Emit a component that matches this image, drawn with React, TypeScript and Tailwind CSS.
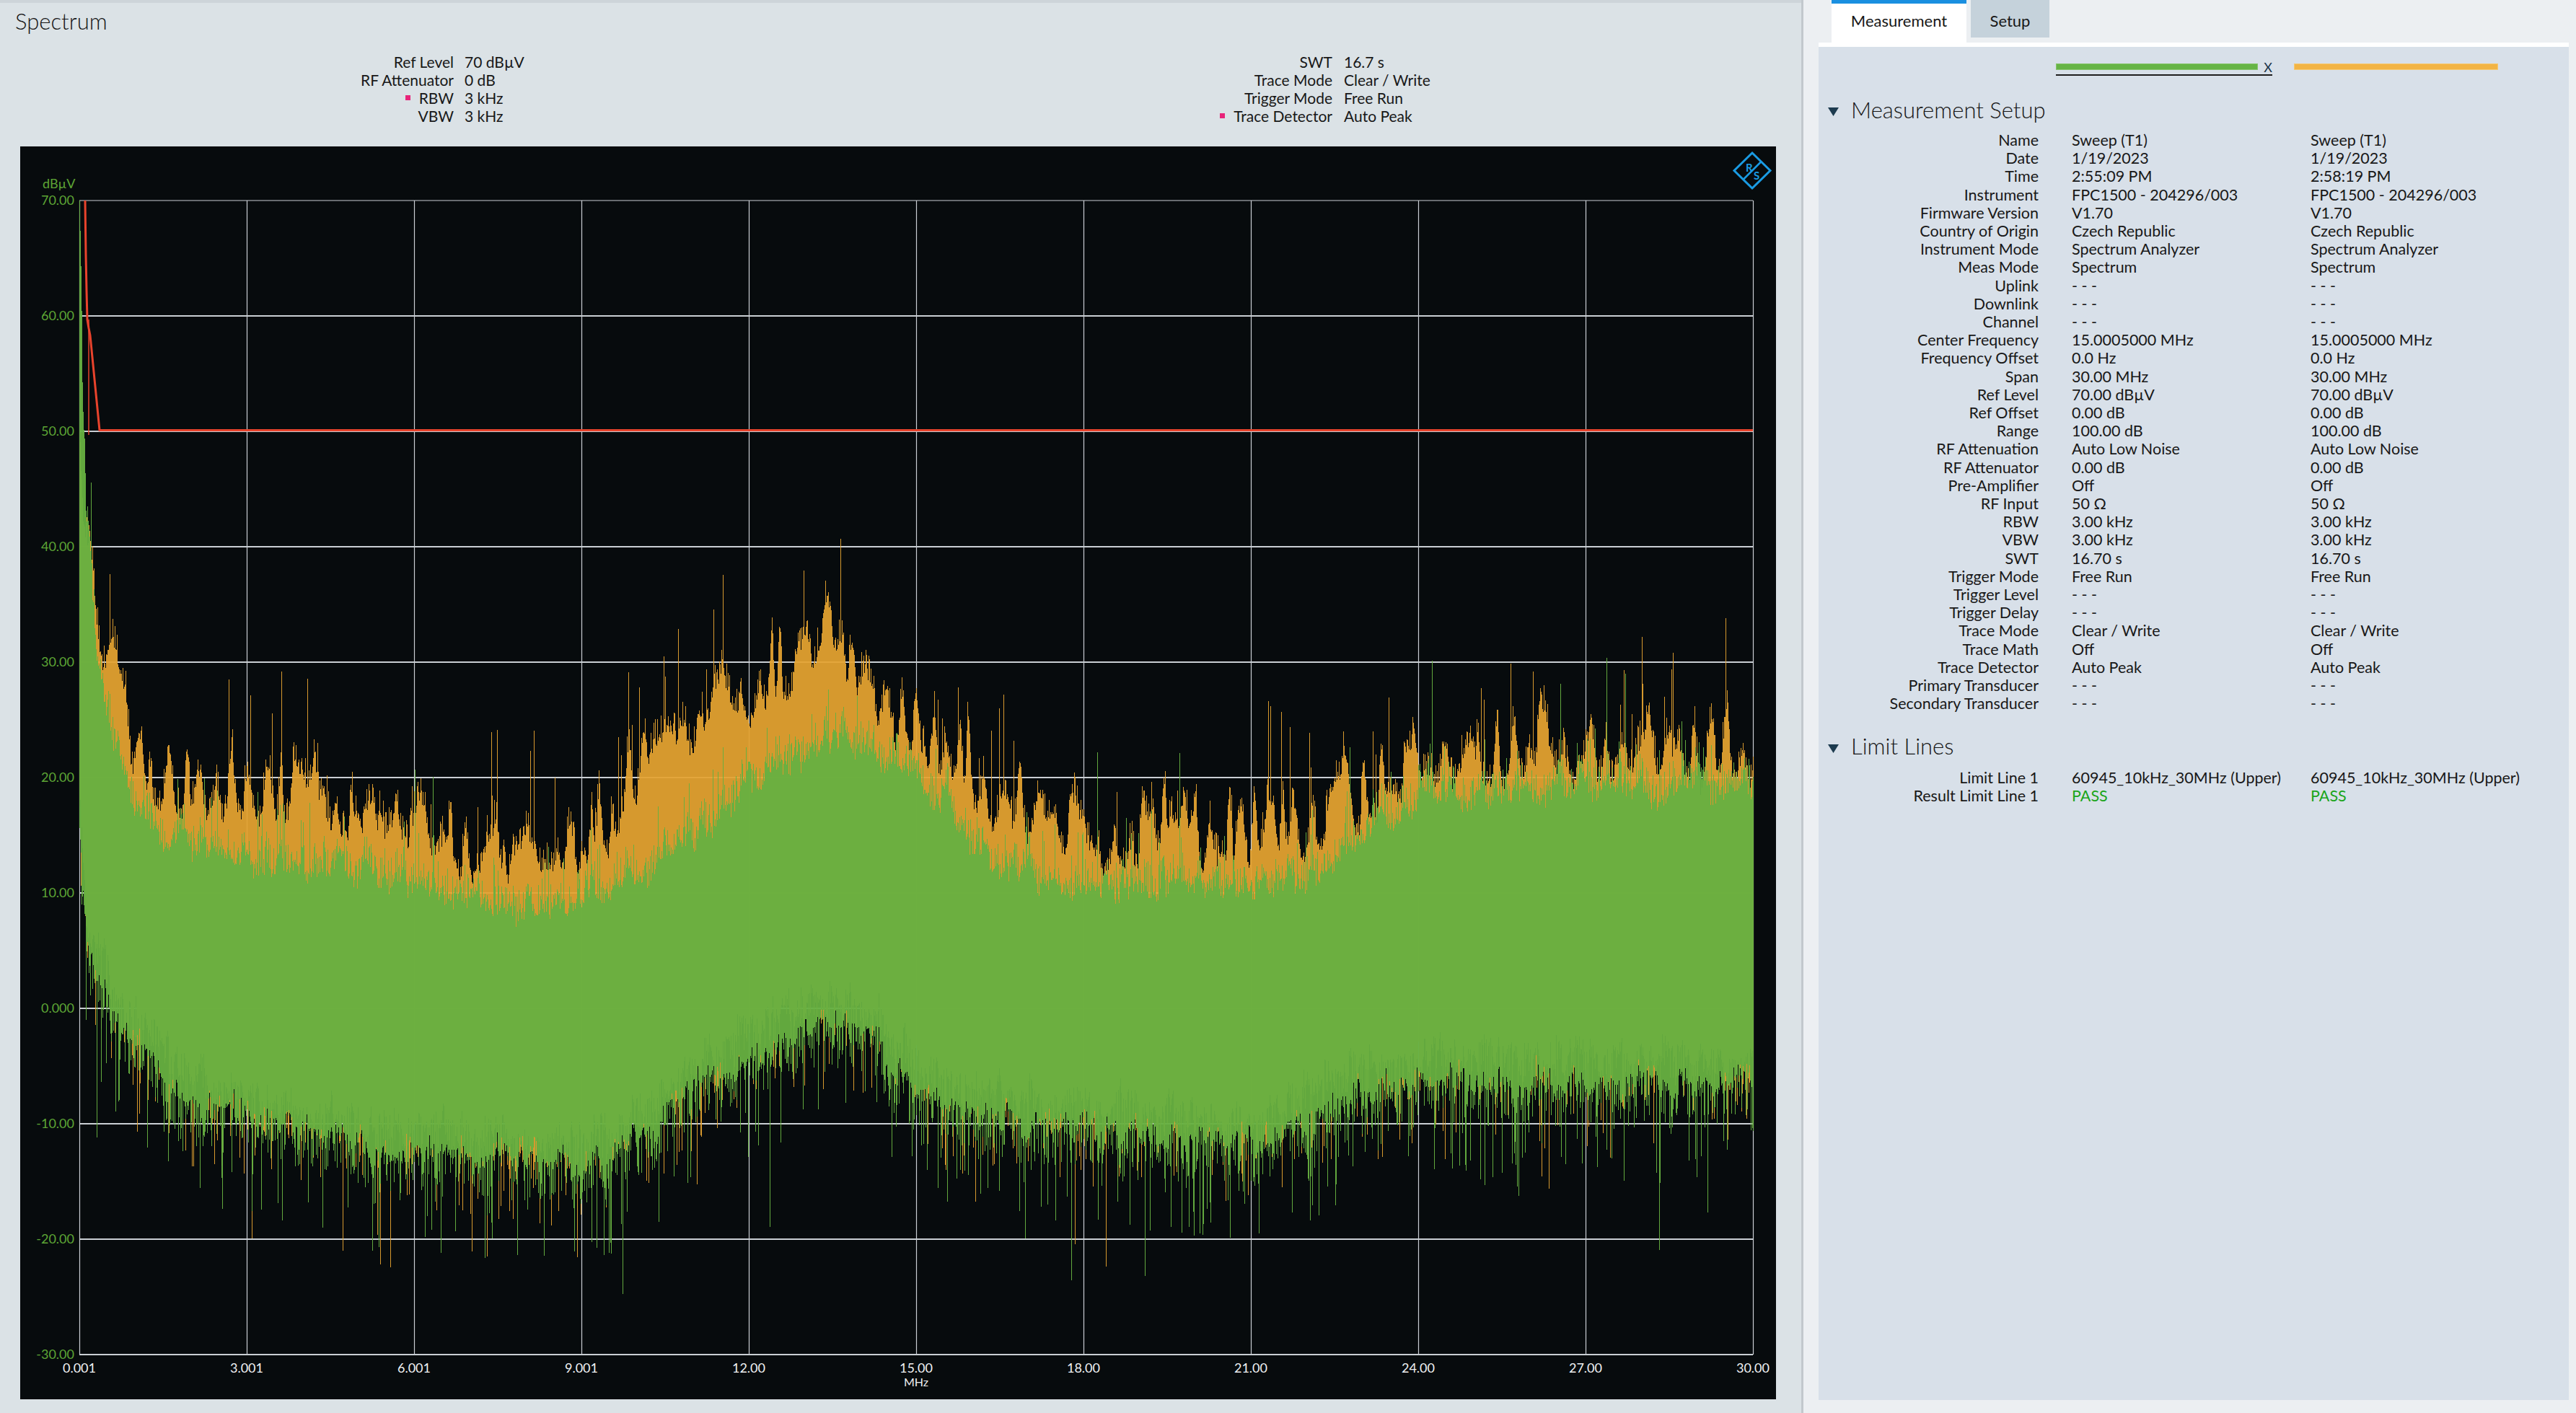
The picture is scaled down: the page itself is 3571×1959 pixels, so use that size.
import { useMemo } from 'react'

// ── seeded noise helpers ──
function mulberry32(seed: number) {
  let a = seed
  return () => {
    a |= 0
    a = (a + 0x6d2b79f5) | 0
    let t = Math.imul(a ^ (a >>> 15), 1 | a)
    t = (t + Math.imul(t ^ (t >>> 7), 61 | t)) ^ t
    return ((t ^ (t >>> 14)) >>> 0) / 4294967296
  }
}

function lerp(pts: number[][], f: number) {
  for (let i = 0; i < pts.length - 1; i++) {
    const [f0, v0] = pts[i]
    const [f1, v1] = pts[i + 1]
    if (f <= f1) return v0 + ((v1 - v0) * (f - f0)) / (f1 - f0)
  }
  return pts[pts.length - 1][1]
}

type Lump = [number, number, number]
function makeLumps(rand: () => number, spacing: number, amp: number): Lump[] {
  const out: Lump[] = []
  for (let c = 0; c < 30.5; c += spacing * (0.5 + rand())) out.push([c, (0.3 + 0.7 * rand()) * amp, 0.04 + rand() * 0.1])
  return out
}
function lumpAt(lumps: Lump[], f: number) {
  let s = 0
  for (const [c, a, w] of lumps) {
    const d = (f - c) / w
    if (d > -4 && d < 4) s += a * Math.exp(-d * d)
  }
  return s
}

// envelopes in dBµV
const ORANGE_TOP = [[0, 48], [0.1, 42], [0.3, 32], [0.9, 23], [1.5, 20], [2, 18.5], [3, 18], [4.4, 18], [5.5, 17], [6.5, 14.5], [7.6, 12], [8.5, 12.5], [9.3, 15], [9.9, 20], [10.5, 23], [11.5, 25], [12.3, 28], [13, 31], [13.5, 33], [14, 29], [14.4, 25], [15, 24], [15.5, 21.5], [16.6, 17], [17.5, 14], [20, 14], [21.5, 15], [22.5, 17], [23.5, 19], [24.5, 21], [26, 20.5], [27, 21.5], [28.5, 22], [30, 21.5]]
const GREEN_TOP = [[0, 72], [0.05, 55], [0.12, 45], [0.2, 40], [0.33, 31], [0.6, 24], [0.9, 20], [1.4, 16.5], [2, 15], [3, 14], [4.4, 13], [6, 12], [7.8, 10], [8.5, 10], [9.9, 12.5], [11, 16], [12, 20], [12.7, 23], [13.4, 25], [14, 24], [15.1, 21], [16, 16], [16.6, 13], [17.5, 12], [22, 12], [23, 16], [24, 19.5], [26, 20.5], [28, 20.5], [30, 20]]
const GREEN_LOW = [[0, 15], [0.05, 10], [0.15, 4], [0.33, 2], [0.6, -1], [0.9, -3], [1.5, -6], [2, -9], [3, -10], [4.4, -12], [6, -13], [7.8, -14], [9, -14], [10, -12], [11, -8], [12, -5], [12.7, -2.5], [13.5, -2], [14.2, -3], [15, -8], [16, -10], [18, -11], [20, -12], [21, -13], [22, -10], [23, -8], [24, -7], [30, -7]]

const GRID_X0 = 82
const GRID_Y0 = 75
const GRID_W = 2320
const DIV_X = 232
const DIV_Y = 160
const toY = (db: number) => GRID_Y0 + (70 - Math.max(-30, Math.min(70, db))) * 16

const Y_LABELS = ['70.00', '60.00', '50.00', '40.00', '30.00', '20.00', '10.00', '0.000', '-10.00', '-20.00', '-30.00']
const X_LABELS = ['0.001', '3.001', '6.001', '9.001', '12.00', '15.00', '18.00', '21.00', '24.00', '27.00', '30.00']

function useTraces() {
  return useMemo(() => {
    const rand = mulberry32(1907)
    const lumpsO = makeLumps(rand, 0.25, 7)
    const lumpsG = makeLumps(rand, 0.5, 3)
    const upO = () => {
      const r = rand()
      if (r < 0.025) return 2 + rand() * 7
      if (r < 0.3) return rand() * 1.5
      return -rand() * 1.2
    }
    const upG = () => {
      const r = rand()
      if (r < 0.01) return 3 + rand() * 9
      if (r < 0.06) return 1 + rand() * 3.5
      if (r < 0.4) return rand() * 1.6
      return -rand() * 1.3
    }
    const down = () => {
      const r = rand()
      if (r < 0.012) return 5 + rand() * 9
      if (r < 0.11) return 2 + rand() * 6
      if (r < 0.45) return rand() * 2.5
      return -rand() * 1.5
    }
    let s1 = 0, s2 = 0, s3 = 0, s4 = 0
    let orange = ''
    let green = ''
    for (let i = 0; i <= GRID_W; i++) {
      const f = 0.001 + (29.999 * i) / GRID_W
      const x = (GRID_X0 + i + 0.5).toFixed(1)
      s1 = s1 * 0.9 + (rand() - 0.5) * 0.9
      s2 = s2 * 0.85 + (rand() - 0.5) * 0.8
      s3 = s3 * 0.85 + (rand() - 0.5) * 1.3
      s4 = s4 * 0.85 + (rand() - 0.5) * 1.3
      const ou = lerp(ORANGE_TOP, f) - 1.5 + lumpAt(lumpsO, f) + s1 + upO()
      const gu = lerp(GREEN_TOP, f) - 1 + lumpAt(lumpsG, f) * 0.6 + s2 + upG()
      const base = lerp(GREEN_LOW, f)
      const gl = base + s3 - down()
      const ol = base + 2.5 + s4 - down() * 0.9
      orange += `M${x} ${toY(ou).toFixed(1)}V${toY(ol).toFixed(1)}`
      green += `M${x} ${toY(gu).toFixed(1)}V${toY(gl).toFixed(1)}`
    }
    return { orange, green }
  }, [])
}

function SpectrumChart() {
  const { orange, green } = useTraces()
  return (
    <div className="flex-1 bg-[#070b0d] ml-[7px]">
      <svg width="2434" height="1737" viewBox="0 0 2434 1737">
        {/* grid */}
        {Array.from({ length: 11 }, (_, k) => (
          <line key={`v${k}`} x1={GRID_X0 + k * DIV_X + 0.5} x2={GRID_X0 + k * DIV_X + 0.5} y1={GRID_Y0} y2={GRID_Y0 + 10 * DIV_Y} stroke="#c9ced3" strokeWidth="1.2" />
        ))}
        {Array.from({ length: 11 }, (_, k) => (
          <line key={`h${k}`} x1={GRID_X0} x2={GRID_X0 + GRID_W} y1={GRID_Y0 + k * DIV_Y} y2={GRID_Y0 + k * DIV_Y} stroke="#c9ced3" strokeWidth={k === 0 ? 1.2 : 2} />
        ))}

        {/* traces */}
        <path d={orange} stroke="#e6a431" strokeWidth="1.15" opacity="0.93" shapeRendering="crispEdges" />
        <path d={green} stroke="#67b141" strokeWidth="1.15" opacity="0.95" shapeRendering="crispEdges" />

        {/* limit line */}
        <polyline points="90,75 91,150 92,200 93,240 95,252 97,262 110,393.5 2402,393.5" fill="none" stroke="#e8432c" strokeWidth="3" />
        <line x1="95" x2="95" y1="240" y2="400" stroke="#e8432c" strokeWidth="1.5" />

        {/* axis labels */}
        <text x="31" y="58" fontSize="18" fill="#5da535">dBµV</text>
        {Y_LABELS.map((l, k) => (
          <text key={l} x="75" y={GRID_Y0 + k * DIV_Y + 6} fontSize="18" fill="#5da535" textAnchor="end">{l}</text>
        ))}
        {X_LABELS.map((l, k) => (
          <text key={l} x={GRID_X0 + k * DIV_X} y="1700" fontSize="18" fill="#eef0f2" textAnchor="middle">{l}</text>
        ))}
        <text x={GRID_X0 + GRID_W / 2} y="1719" fontSize="16" fill="#eef0f2" textAnchor="middle">MHz</text>

        {/* R&S logo */}
        <polygon points="2401,9 2426,33.5 2401,58 2376,33.5" fill="none" stroke="#1a9be3" strokeWidth="3" />
        <line x1="2413.5" y1="21" x2="2388.5" y2="46" stroke="#1a9be3" strokeWidth="2.5" />
        <text x="2392" y="35" fontSize="15" fontWeight="700" fill="#1a9be3">R</text>
        <text x="2403" y="46" fontSize="15" fontWeight="700" fill="#1a9be3">S</text>
      </svg>
    </div>
  )
}

const LEFT_INFO: [string, string, boolean][] = [
  ['Ref Level', '70 dBµV', false],
  ['RF Attenuator', '0 dB', false],
  ['RBW', '3 kHz', true],
  ['VBW', '3 kHz', false],
]
const RIGHT_INFO: [string, string, boolean][] = [
  ['SWT', '16.7 s', false],
  ['Trace Mode', 'Clear / Write', false],
  ['Trigger Mode', 'Free Run', false],
  ['Trace Detector', 'Auto Peak', true],
]

function InfoGroup({ rows, className }: { rows: [string, string, boolean][]; className: string }) {
  return (
    <div className={`grid grid-cols-[260px_auto] leading-[25px] ${className}`}>
      {rows.map(([label, value, marked]) => (
        <div key={label} className="contents">
          <div className="flex items-center justify-end gap-[12px]">
            {marked && <span className="w-[7px] h-[7px] bg-[#e8247a]" />}
            <span>{label}</span>
          </div>
          <div>{value}</div>
        </div>
      ))}
    </div>
  )
}

const DASH = '- - -'
const SETUP: [string, string, string][] = [
  ['Name', 'Sweep (T1)', 'Sweep (T1)'],
  ['Date', '1/19/2023', '1/19/2023'],
  ['Time', '2:55:09 PM', '2:58:19 PM'],
  ['Instrument', 'FPC1500 - 204296/003', 'FPC1500 - 204296/003'],
  ['Firmware Version', 'V1.70', 'V1.70'],
  ['Country of Origin', 'Czech Republic', 'Czech Republic'],
  ['Instrument Mode', 'Spectrum Analyzer', 'Spectrum Analyzer'],
  ['Meas Mode', 'Spectrum', 'Spectrum'],
  ['Uplink', DASH, DASH],
  ['Downlink', DASH, DASH],
  ['Channel', DASH, DASH],
  ['Center Frequency', '15.0005000 MHz', '15.0005000 MHz'],
  ['Frequency Offset', '0.0 Hz', '0.0 Hz'],
  ['Span', '30.00 MHz', '30.00 MHz'],
  ['Ref Level', '70.00 dBµV', '70.00 dBµV'],
  ['Ref Offset', '0.00 dB', '0.00 dB'],
  ['Range', '100.00 dB', '100.00 dB'],
  ['RF Attenuation', 'Auto Low Noise', 'Auto Low Noise'],
  ['RF Attenuator', '0.00 dB', '0.00 dB'],
  ['Pre-Amplifier', 'Off', 'Off'],
  ['RF Input', '50 Ω', '50 Ω'],
  ['RBW', '3.00 kHz', '3.00 kHz'],
  ['VBW', '3.00 kHz', '3.00 kHz'],
  ['SWT', '16.70 s', '16.70 s'],
  ['Trigger Mode', 'Free Run', 'Free Run'],
  ['Trigger Level', DASH, DASH],
  ['Trigger Delay', DASH, DASH],
  ['Trace Mode', 'Clear / Write', 'Clear / Write'],
  ['Trace Math', 'Off', 'Off'],
  ['Trace Detector', 'Auto Peak', 'Auto Peak'],
  ['Primary Transducer', DASH, DASH],
  ['Secondary Transducer', DASH, DASH],
]

function SectionHeading({ title, className }: { title: string; className: string }) {
  return (
    <div className={`flex items-center h-[40px] ${className}`}>
      <svg width="45" height="14" viewBox="0 0 45 14" className="mt-[6px]">
        <polygon points="13,1 28,1 20.5,13" fill="#1d3b4f" />
      </svg>
      <span className="text-[31px] font-light text-[#151515]">{title}</span>
    </div>
  )
}

function DataGrid({ rows, pass }: { rows: [string, string, string][]; pass?: boolean }) {
  return (
    <div className="grid grid-cols-[305px_285px_1fr] gap-x-[46px] leading-[25.2px] text-[21.5px]">
      {rows.map(([label, a, b], i) => {
        const isPass = pass && i === rows.length - 1
        return (
          <div key={label} className="contents">
            <div className="text-right whitespace-nowrap">{label}</div>
            <div className={`whitespace-nowrap ${isPass ? 'text-[#1aa51a]' : ''}`}>{a}</div>
            <div className={`whitespace-nowrap ${isPass ? 'text-[#1aa51a]' : ''}`}>{b}</div>
          </div>
        )
      })}
    </div>
  )
}

export default function App() {
  return (
    <div className="flex w-[3571px] h-[1959px] overflow-hidden text-[#181818] font-['Segoe_UI',Lato,'Noto_Sans',sans-serif]">
      {/* ── Spectrum panel ── */}
      <div className="w-[2497px] flex flex-col bg-[#dbe2e6] border-t-[4px] border-[#cdd4d9] pl-[21px] pr-[35px] pb-[18px]">
        <div className="h-[50px] flex items-center text-[31px] font-light text-[#151515]">Spectrum</div>
        <div className="flex mt-[19px] pl-[348px] text-[21px]">
          <InfoGroup rows={LEFT_INFO} className="w-[1218px] gap-x-[15px]" />
          <InfoGroup rows={RIGHT_INFO} className="gap-x-[16px]" />
        </div>
        <div className="mt-[30px] flex">
          <SpectrumChart />
        </div>
      </div>

      {/* ── Results panel ── */}
      <div className="flex-1 flex flex-col bg-[#eceff2] border-l-[3px] border-[#c2c8cd] pl-[21px] pr-[10px] pb-[18px]">
        <div className="h-[59px] flex gap-[6px] pl-[18px]">
          <div className="w-[187px] h-[59px] bg-white border-t-[5px] border-[#1a8fe0] flex justify-center pt-[7px] text-[22px]">
            Measurement
          </div>
          <div className="w-[109px] h-[52px] bg-[#c5d2db] flex justify-center pt-[12px] text-[22px]">
            Setup
          </div>
        </div>
        <div className="h-[6px] bg-white" />
        <div className="flex-1 bg-[#d8e0e9] pt-[23px]">
          {/* trace legend */}
          <div className="flex pl-[329px] h-[17px]">
            <div className="flex flex-col w-[300px]">
              <div className="flex items-center h-[9px]">
                <div className="w-[282px] h-[9px] bg-[#66b446] border border-[#86c46a]" />
                <span className="ml-[8px] text-[18px] leading-none text-[#1c3549]">X</span>
              </div>
              <div className="mt-[6px] h-[2px] bg-[#1e1e1e]" />
            </div>
            <div className="ml-[30px] w-[283px] h-[9px] bg-[#f2b445] border border-[#f6c870]" />
          </div>

          <SectionHeading title="Measurement Setup" className="mt-[27px]" />
          <div className="mt-[10px]">
            <DataGrid rows={SETUP} />
          </div>

          <SectionHeading title="Limit Lines" className="mt-[26px]" />
          <div className="mt-[11px]">
            <DataGrid
              pass
              rows={[
                ['Limit Line 1', '60945_10kHz_30MHz (Upper)', '60945_10kHz_30MHz (Upper)'],
                ['Result Limit Line 1', 'PASS', 'PASS'],
              ]}
            />
          </div>
        </div>
      </div>
    </div>
  )
}
